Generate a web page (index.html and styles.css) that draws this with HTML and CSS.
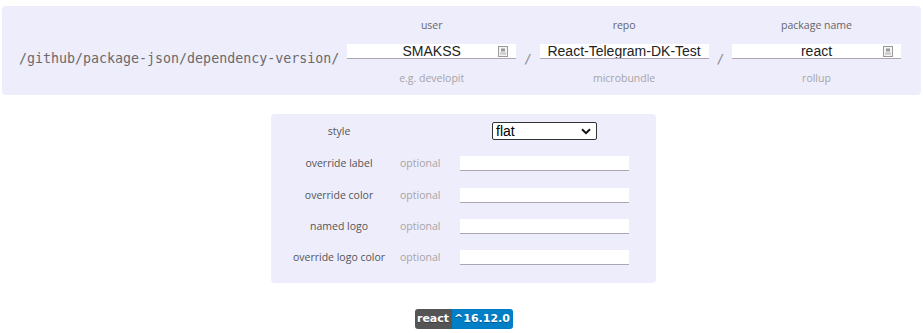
FILE: index.html
```html
<!DOCTYPE html>
<html>
<head>
<meta charset="utf-8">
<link rel="stylesheet" href="styles.css">
</head>
<body>
<div class="path-panel">
  <span class="path">/github/package-json/dependency-version/</span>
  <div class="field">
    <span class="field-label">user</span>
    <div class="input-wrap">
      <input class="text-input" value="SMAKSS">
      <svg class="autofill" width="10" height="11" viewBox="0 0 10 11"><rect x="0.5" y="0.5" width="9" height="10" fill="#f4f4f4" stroke="#9a9a9a"/><rect x="3" y="2.5" width="4" height="3" fill="#9a9a9a"/><rect x="2" y="6.5" width="6" height="2" fill="#c4c4c4"/></svg>
    </div>
    <span class="field-hint">e.g. developit</span>
  </div>
  <span class="sep">/</span>
  <div class="field">
    <span class="field-label">repo</span>
    <div class="input-wrap">
      <input class="text-input" value="React-Telegram-DK-Test">
    </div>
    <span class="field-hint">microbundle</span>
  </div>
  <span class="sep">/</span>
  <div class="field">
    <span class="field-label">package name</span>
    <div class="input-wrap">
      <input class="text-input" value="react">
      <svg class="autofill" width="10" height="11" viewBox="0 0 10 11"><rect x="0.5" y="0.5" width="9" height="10" fill="#f4f4f4" stroke="#9a9a9a"/><rect x="3" y="2.5" width="4" height="3" fill="#9a9a9a"/><rect x="2" y="6.5" width="6" height="2" fill="#c4c4c4"/></svg>
    </div>
    <span class="field-hint">rollup</span>
  </div>
</div>

<div class="centered">
  <div class="options-panel">
    <span class="opt-label">style</span>
    <span class="opt-hint"></span>
    <div class="select-wrap">
      <select class="style-select"><option>flat</option></select>
      <svg class="chev" width="10" height="7" viewBox="0 0 10 7"><path d="M1 1.2 L5 5.2 L9 1.2" fill="none" stroke="#111" stroke-width="2"/></svg>
    </div>

    <span class="opt-label">override label</span>
    <span class="opt-hint">optional</span>
    <input class="opt-input">

    <span class="opt-label">override color</span>
    <span class="opt-hint">optional</span>
    <input class="opt-input">

    <span class="opt-label">named logo</span>
    <span class="opt-hint">optional</span>
    <input class="opt-input">

    <span class="opt-label">override logo color</span>
    <span class="opt-hint">optional</span>
    <input class="opt-input">
  </div>

  <div class="badge-row">
    <div class="badge"><span class="badge-label">react</span><span class="badge-value">^16.12.0</span></div>
  </div>
</div>
</body>
</html>
```

FILE: styles.css
```css
html, body {
  margin: 0;
  padding: 0;
  background: #ffffff;
}

body {
  padding: 6px 2px 0 2px;
  font-family: "Open Sans", "Noto Sans", sans-serif;
}

.path-panel {
  display: flex;
  align-items: center;
  background: #eeedfc;
  border-radius: 4px;
  padding: 12px 20px 10px 17px;
  height: 67px;
}

.path {
  font-family: "DejaVu Sans Mono", "Liberation Mono", monospace;
  font-size: 13.3px;
  color: #6a6a6a;
  padding-top: 13px;
  margin-right: 8px;
  white-space: nowrap;
}

.field {
  width: 169px;
  display: flex;
  flex-direction: column;
  align-items: center;
}

.field-label {
  font-size: 10.5px;
  line-height: 14px;
  color: #666;
}

.field-hint {
  font-size: 10.5px;
  line-height: 14px;
  color: #a5a5a5;
  margin-top: 12px;
}

.input-wrap {
  position: relative;
  width: 169px;
  margin-top: 12px;
}

.text-input {
  display: block;
  box-sizing: border-box;
  width: 169px;
  height: 15px;
  border: 0;
  border-bottom: 1px solid #aca5b6;
  background: #fff;
  padding: 0;
  margin: 0;
  text-align: center;
  font-family: "Liberation Sans", Arial, sans-serif;
  font-size: 14px;
  color: #222;
  outline: none;
}

.autofill {
  position: absolute;
  right: 8px;
  top: 2px;
}

.sep {
  width: 24px;
  text-align: center;
  font-family: "DejaVu Sans Mono", monospace;
  font-size: 13px;
  color: #8a8a8a;
  padding-top: 13px;
}

.centered {
  padding-left: 4px;
}

.options-panel {
  width: 385px;
  box-sizing: border-box;
  margin: 19px auto 0;
  background: #eeedfc;
  border-radius: 4px;
  padding: 8px 27px 18px 7px;
  display: grid;
  grid-template-columns: 122px 40px 169px;
  column-gap: 0;
  row-gap: 16.3px;
  align-items: center;
}

.options-panel .opt-input {
  margin-left: 20px;
}

.opt-label {
  text-align: center;
  font-size: 10.5px;
  line-height: 15px;
  color: #555;
  white-space: nowrap;
}

.opt-hint {
  font-size: 10.5px;
  line-height: 15px;
  color: #a5a5a5;
  text-align: left;
}

.opt-input {
  display: block;
  box-sizing: border-box;
  width: 169px;
  height: 15px;
  border: 0;
  border-bottom: 1px solid #aca5b6;
  background: #fff;
  padding: 0;
  outline: none;
}

.select-wrap {
  position: relative;
  width: 105px;
  height: 18px;
  margin-left: 52px;
}

.style-select {
  -webkit-appearance: none;
  appearance: none;
  display: block;
  box-sizing: border-box;
  width: 105px;
  height: 18px;
  border: 1px solid #333;
  border-radius: 2px;
  background: #fff;
  padding: 0 0 0 3px;
  margin: 0;
  font-family: "Liberation Sans", Arial, sans-serif;
  font-size: 14px;
  line-height: 16px;
  color: #000;
  outline: none;
}

.chev {
  position: absolute;
  right: 6px;
  top: 6px;
}

.badge-row {
  display: flex;
  justify-content: center;
  margin-top: 26px;
}

.badge {
  display: flex;
  height: 20px;
  border-radius: 3px;
  overflow: hidden;
  font-family: "DejaVu Sans", Verdana, sans-serif;
  font-weight: bold;
  font-size: 11px;
  line-height: 20px;
  color: #fff;
  text-shadow: 0 1px 0 rgba(1, 1, 1, 0.3);
}

.badge-label {
  width: 37px;
  text-align: center;
  background: #555;
}

.badge-value {
  width: 61px;
  text-align: center;
  background: #007ec6;
}
```
